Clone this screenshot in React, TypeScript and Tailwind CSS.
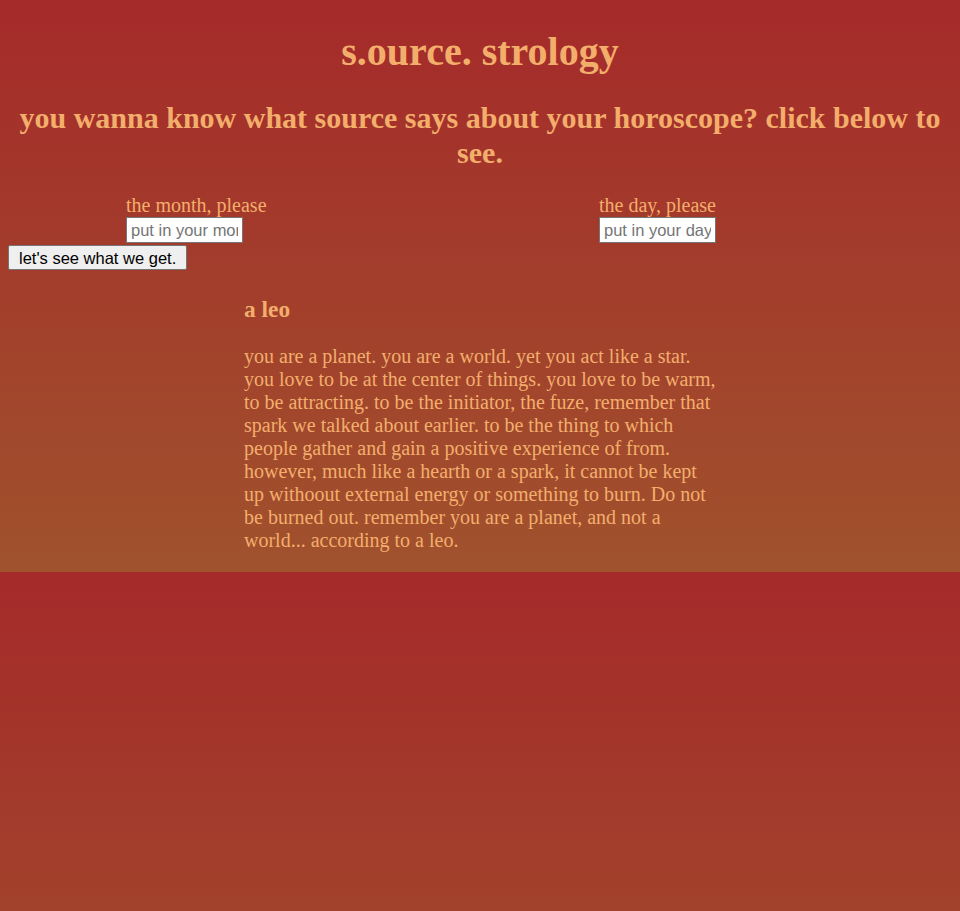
import { useState } from "react";

const serif = "font-['Liberation_Serif','Times_New_Roman',serif]";
const sans = "font-['Liberation_Sans',Arial,sans-serif]";

const LEO_TEXT =
  "you are a planet. you are a world. yet you act like a star. you love to be at the center of things. you love to be warm, to be attracting. to be the initiator, the fuze, remember that spark we talked about earlier. to be the thing to which people gather and gain a positive experience of from. however, much like a hearth or a spark, it cannot be kept up withoout external energy or something to burn. Do not be burned out. remember you are a planet, and not a world... according to a leo.";

export default function App() {
  const [month, setMonth] = useState("");
  const [day, setDay] = useState("");

  return (
    <div
      className={`${serif} min-h-[911px] bg-[linear-gradient(180deg,#a52a2a,#a0522d)] bg-size-[100%_572px] bg-repeat px-2 pt-px text-[20px] text-[#f3ae6c]`}
    >
      <h1 className="mt-[28px] mb-[26px] text-center text-[40px] font-bold leading-[46px]">s.ource. strology</h1>
      <h2 className="mb-[24px] text-center text-[30px] font-bold leading-[34.5px]">
        you wanna know what source says about your horoscope? click below to see.
      </h2>

      <div className="grid grid-cols-2">
        <div className="pl-[118px]">
          <label className="block leading-[23px]" htmlFor="month">
            the month, please
          </label>
          <input
            id="month"
            value={month}
            onChange={(event) => setMonth(event.target.value)}
            placeholder="put in your month"
            className={`${sans} block h-[26px] w-[117px] border border-[#767676] bg-white px-[4px] text-[16.5px] text-black placeholder:text-[#757575]`}
          />
        </div>
        <div className="pl-[119px]">
          <label className="block leading-[23px]" htmlFor="day">
            the day, please
          </label>
          <input
            id="day"
            value={day}
            onChange={(event) => setDay(event.target.value)}
            placeholder="put in your day"
            className={`${sans} block h-[26px] w-[117px] border border-[#767676] bg-white px-[4px] text-[16.5px] text-black placeholder:text-[#757575]`}
          />
        </div>
      </div>
      <button
        type="button"
        className={`${sans} mt-[2px] block h-[25px] rounded-[2px] border border-[#767676] bg-[#efefef] px-[10px] text-[16.5px] leading-[20px] text-black`}
      >
        let's see what we get.
      </button>

      <section className="mx-auto w-1/2">
        <h3 className="mt-[26px] mb-[22px] text-[23.4px] font-bold leading-[27px]">a leo</h3>
        <p className="pb-[21px] leading-[23px]">{LEO_TEXT}</p>
      </section>
    </div>
  );
}
